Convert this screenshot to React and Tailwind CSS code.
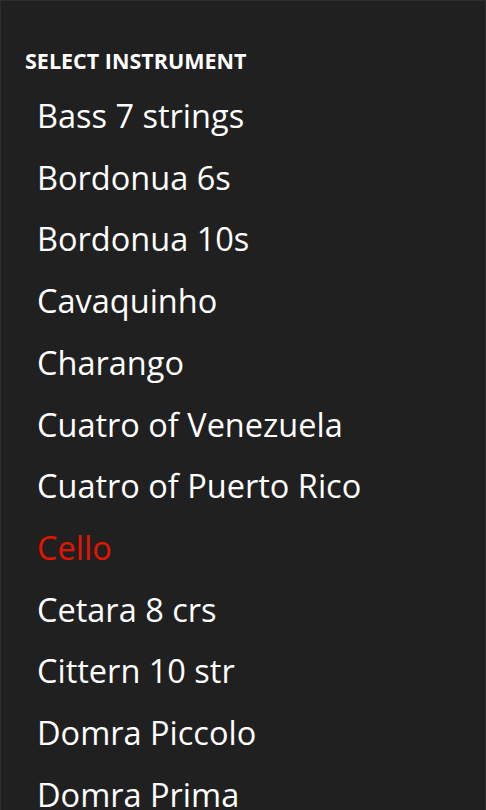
export default function App() {
  const items = [
    "Bass 7 strings",
    "Bordonua 6s",
    "Bordonua 10s",
    "Cavaquinho",
    "Charango",
    "Cuatro of Venezuela",
    "Cuatro of Puerto Rico",
    "Cello",
    "Cetara 8 crs",
    "Cittern 10 str",
    "Domra Piccolo",
    "Domra Prima",
  ];
  return (
    <div
      className="h-[810px] w-[486px] overflow-hidden border-x border-t border-[#2e2e2e] bg-[#202020] text-white"
      style={{ fontFamily: '"Open Sans", "Noto Sans", sans-serif' }}
    >
      <div className="pl-[24px] pt-[46px] text-[21.5px] font-bold leading-[28px] tracking-[0px]">
        SELECT INSTRUMENT
      </div>
      <ul className="mt-[10px] pl-[36px]">
        {items.map((t) => (
          <li
            key={t}
            className={
              "text-[32.5px] leading-[61.7px] tracking-[0px] " +
              (t === "Cello" ? "text-[#e51400]" : "text-white")
            }
          >
            {t}
          </li>
        ))}
      </ul>
    </div>
  );
}
